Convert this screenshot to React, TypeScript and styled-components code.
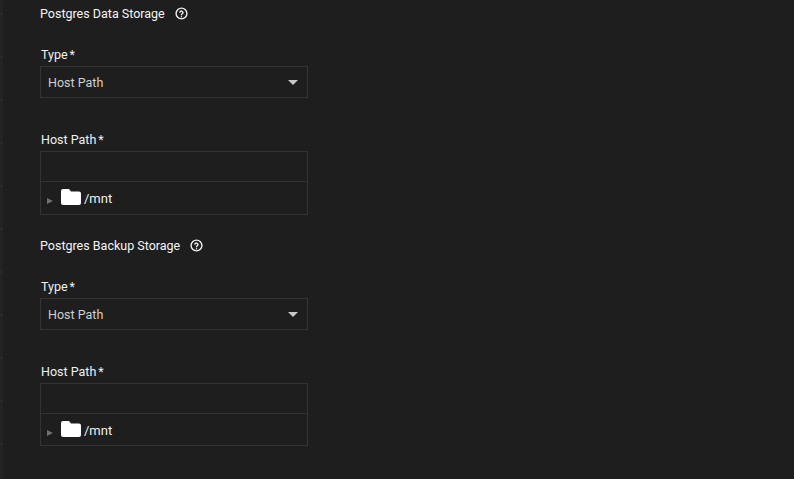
import { FC } from "react";
import styled, { createGlobalStyle } from "styled-components";

const GlobalStyle = createGlobalStyle`
    html, body {
        margin: 0;
        padding: 0;
        background: #1e1e1e;
    }
`;

const Page = styled.div`
    width: 794px;
    height: 479px;
    overflow: hidden;
    display: flex;
    background: #1e1e1e;
    color: #f0f0f0;
    font-family: Roboto, "Liberation Sans", sans-serif;
`;

const SideEdge = styled.div`
    width: 3px;
    flex-shrink: 0;
    background: repeating-linear-gradient(
        to bottom,
        #232323 0,
        #232323 13px,
        #2a2a2a 13px,
        #2a2a2a 15px,
        #232323 15px,
        #232323 43px
    );
`;

const Form = styled.div`
    width: 268px;
    margin-left: 37px;
    display: flex;
    flex-direction: column;
`;

const Section = styled.section`
    height: 232px;
    display: flex;
    flex-direction: column;
`;

const SectionHeader = styled.div`
    height: 26px;
    display: flex;
    align-items: center;
    gap: 10px;
    font-size: 12.5px;
    color: #f5f5f5;
`;

const HelpIcon = styled.svg`
    width: 13px;
    height: 13px;
    margin-top: 1px;
    display: block;
`;

const FieldLabel = styled.div<{ $top: number }>`
    margin-top: ${(p) => p.$top}px;
    margin-bottom: 2px;
    padding-left: 1px;
    height: 18px;
    line-height: 18px;
    font-size: 12.5px;
`;

const Asterisk = styled.span`
    margin-left: 2px;
`;

const SelectBox = styled.div`
    box-sizing: border-box;
    height: 32px;
    display: flex;
    align-items: center;
    justify-content: space-between;
    padding: 0 9px 0 7px;
    border: 1px solid #333333;
    font-size: 12.5px;
    color: #d0d0d0;
`;

const Caret = styled.span`
    width: 0;
    height: 0;
    border-left: 5px solid transparent;
    border-right: 5px solid transparent;
    border-top: 5px solid #c8c8c8;
`;

const PathInput = styled.div`
    box-sizing: border-box;
    height: 31px;
    border: 1px solid #333333;
`;

const TreeBox = styled.div<{ $height: number }>`
    box-sizing: border-box;
    height: ${(p) => p.$height}px;
    margin-top: -1px;
    display: flex;
    align-items: flex-start;
    padding-left: 6px;
    border: 1px solid #333333;
    font-size: 13px;
`;

const TreeToggle = styled.span`
    width: 0;
    height: 0;
    margin-top: 16px;
    margin-right: 8px;
    border-top: 3px solid transparent;
    border-bottom: 3px solid transparent;
    border-left: 6px solid #6f6f6f;
`;

const FolderIcon = styled.svg`
    width: 20px;
    height: 16px;
    margin-top: 7px;
    margin-right: 3px;
    display: block;
`;

const TreeName = styled.span`
    margin-top: 8px;
    line-height: 18px;
`;

const Help: FC = () => (
    <HelpIcon viewBox="0 0 24 24" fill="none" stroke="#f0f0f0" strokeWidth="2.6" strokeLinecap="round">
        <circle cx="12" cy="12" r="10" />
        <path d="M9 9.5a3 3 0 0 1 5.8.8c0 2-2.8 2.4-2.8 4.2" />
        <path d="M12 17.8v.2" />
    </HelpIcon>
);

const Folder: FC = () => (
    <FolderIcon viewBox="0 0 20 16">
        <path
            fill="#ffffff"
            d="M2 0h6l2 2.5h8a2 2 0 0 1 2 2V14a2 2 0 0 1-2 2H2a2 2 0 0 1-2-2V2a2 2 0 0 1 2-2z"
        />
    </FolderIcon>
);

type StorageProps = {
    title: string;
    treeHeight: number;
};

const StorageSection: FC<StorageProps> = ({ title, treeHeight }) => (
    <Section>
        <SectionHeader>
            {title}
            <Help />
        </SectionHeader>
        <FieldLabel $top={20}>
            Type<Asterisk>*</Asterisk>
        </FieldLabel>
        <SelectBox>
            Host Path
            <Caret />
        </SelectBox>
        <FieldLabel $top={33}>
            Host Path<Asterisk>*</Asterisk>
        </FieldLabel>
        <PathInput />
        <TreeBox $height={treeHeight}>
            <TreeToggle />
            <Folder />
            <TreeName>/mnt</TreeName>
        </TreeBox>
    </Section>
);

const App: FC = () => (
    <Page>
        <GlobalStyle />
        <SideEdge />
        <Form>
            <StorageSection title="Postgres Data Storage" treeHeight={34} />
            <StorageSection title="Postgres Backup Storage" treeHeight={33} />
        </Form>
    </Page>
);

export default App;
